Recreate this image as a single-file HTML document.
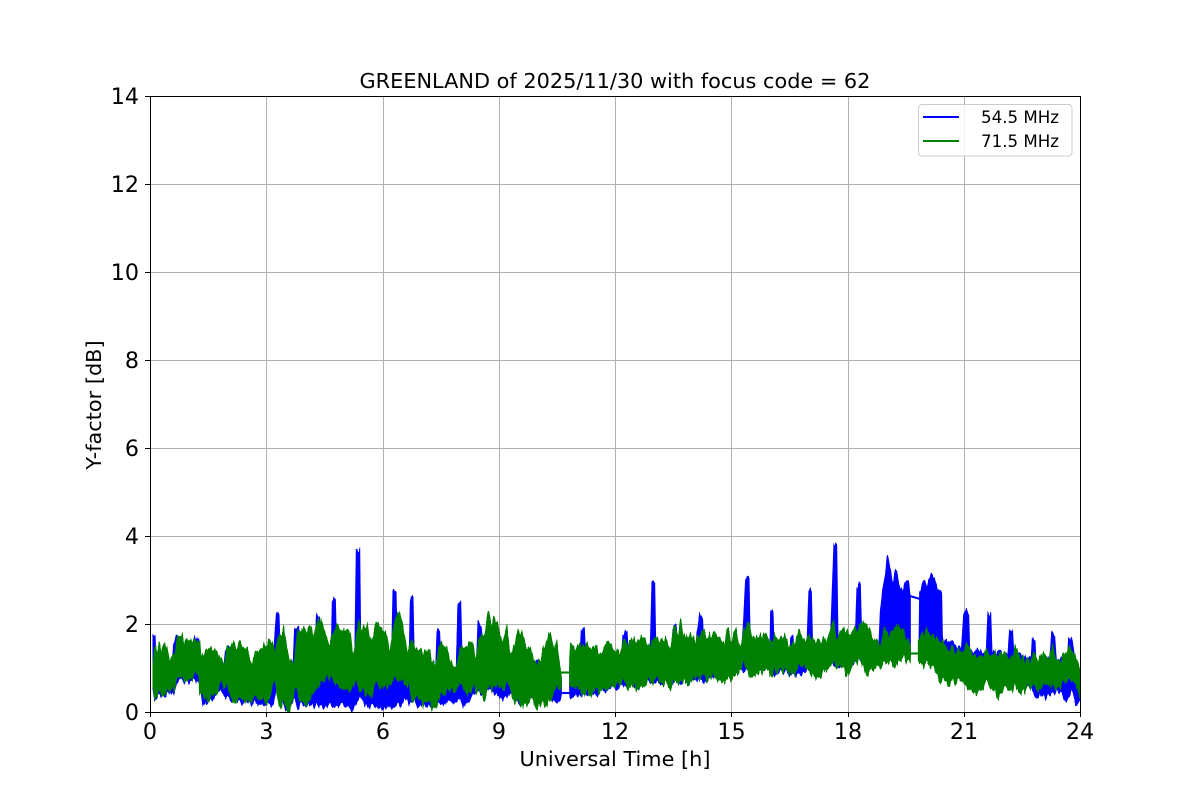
<!DOCTYPE html>
<html><head><meta charset="utf-8"><title>GREENLAND</title>
<style>
html,body{margin:0;padding:0;background:#fff;width:1200px;height:800px;overflow:hidden}
svg{display:block}
text{font-family:"DejaVu Sans",sans-serif;fill:#000}
.t{font-size:22.22px}
.l{font-size:20.83px}
.e{text-anchor:end}
.m{text-anchor:middle}
</style></head><body>
<svg width="1200" height="800" viewBox="0 0 1200 800" xmlns="http://www.w3.org/2000/svg">
<defs>
<clipPath id="ax"><rect x="150" y="96" width="930" height="616"/></clipPath>
<filter id="nb" filterUnits="userSpaceOnUse" x="140" y="500" width="950" height="230" color-interpolation-filters="sRGB">
<feTurbulence type="fractalNoise" baseFrequency="0.35 0.002" numOctaves="2" seed="3" result="n"/>
<feColorMatrix in="n" type="matrix" values="0 0 0 0 .5  0 1 0 0 0  0 0 0 0 .5  0 0 0 0 1" result="m"/>
<feDisplacementMap in="SourceGraphic" in2="m" scale="14" xChannelSelector="R" yChannelSelector="G"/>
</filter>
<filter id="ng" filterUnits="userSpaceOnUse" x="140" y="500" width="950" height="230" color-interpolation-filters="sRGB">
<feTurbulence type="fractalNoise" baseFrequency="0.35 0.002" numOctaves="2" seed="11" result="n"/>
<feColorMatrix in="n" type="matrix" values="0 0 0 0 .5  0 1 0 0 0  0 0 0 0 .5  0 0 0 0 1" result="m"/>
<feDisplacementMap in="SourceGraphic" in2="m" scale="22" xChannelSelector="R" yChannelSelector="G"/>
</filter>
</defs>
<rect width="1200" height="800" fill="#fff"/>
<g stroke="#b0b0b0" stroke-width="1" fill="none">
<path d="M266.5 96V712M383.5 96V712M499.5 96V712M615.5 96V712M731.5 96V712M848.5 96V712M964.5 96V712"/>
<path d="M150 624.5H1080M150 536.5H1080M150 448.5H1080M150 360.5H1080M150 272.5H1080M150 184.5H1080"/>
</g>
<g clip-path="url(#ax)">
<!-- blue -->
<g fill="#0000ff" stroke="#0000ff" stroke-width="5" stroke-linejoin="round" filter="url(#nb)">
<g transform="translate(140,521) scale(.33333)">
<polygon points="40,333 44,333 48,440 98,440 102,370 110,342 120,345 135,440 160,440 165,350 175,347 182,440 252,440 258,382 265,380 270,440 400,440 405,350 410,275 416,275 420,400 460,440 465,320 475,318 480,440 525,440 530,288 537,290 542,440 574,440 578,232 585,232 590,440 645,440 650,85 658,85 662,440 755,440 760,208 767,210 772,440 808,440 812,233 818,233 822,440 888,440 892,335 898,337 902,440 950,440 955,245 960,245 960,530 910,550 870,555 830,545 800,540 770,555 730,560 680,550 655,520 640,565 610,545 590,555 560,555 535,555 510,555 480,535 475,565 465,520 445,570 420,530 410,480 400,545 385,552 350,548 320,545 280,540 260,525 240,515 205,550 190,548 178,470 165,478 135,490 120,458 110,480 100,518 60,520 45,525 40,495"/>
</g>
<g transform="translate(450,521) scale(.33333)">
<polygon points="0,440 20,440 25,245 31,245 36,440 80,440 85,310 93,310 98,440 250,450 258,430 268,430 330,460 333,470 333,520 330,540 290,530 240,535 210,540 185,515 160,535 120,510 75,520 40,555 25,525 0,535"/>
<polygon points="360,440 390,440 395,328 402,328 407,440 515,430 520,345 530,330 536,430 600,420 603,340 607,185 613,185 617,420 665,420 670,318 678,320 683,420 738,410 742,330 750,285 757,285 761,410 875,400 880,320 888,170 896,170 900,400 960,400 960,440 880,440 830,450 770,473 720,480 670,485 620,485 580,490 525,495 480,500 440,515 405,525 375,525 360,522"/>
</g>
<g transform="translate(770,521) scale(.33333)">
<polygon points="0,420 3,268 8,268 13,420 60,420 63,345 68,345 72,420 110,420 118,207 123,207 128,420 180,420 186,270 193,68 199,68 204,420 255,420 262,200 270,187 276,420 325,420 332,270 338,215 348,150 352,103 358,140 370,190 378,145 385,195 400,215 408,180 415,180 420,228 420,400 330,410 105,445 70,457 40,452 0,455"/>
<polygon points="448,400 450,215 462,182 470,200 483,158 490,165 500,205 514,225 516,350 530,370 550,370 575,385 582,280 595,277 598,390 650,395 655,275 661,275 665,395 715,395 720,325 726,325 730,400 785,410 788,350 794,350 797,420 840,420 846,337 853,335 858,420 893,420 897,350 903,350 915,420 929,450 929,540 918,545 905,500 890,540 860,505 830,530 800,522 780,490 600,440 516,430"/>
</g>
</g>
<g fill="none" stroke="#0000ff" stroke-width="2.1">
<path d="M561 693H571"/>
<path d="M910 596L920 599"/>
</g>
<!-- green -->
<g fill="#008000" stroke="#008000" stroke-width="5" stroke-linejoin="round" filter="url(#ng)">
<g transform="translate(140,521) scale(.33333)">
<polygon points="40,430 45,370 50,400 58,375 63,400 72,365 80,390 88,425 100,420 108,385 115,350 125,340 132,365 140,355 150,365 158,355 165,385 178,360 182,420 195,400 208,370 215,400 230,385 240,430 255,420 262,390 272,380 280,360 290,380 300,355 308,385 320,378 330,420 342,415 355,390 370,380 385,352 395,365 405,410 415,335 430,335 440,380 455,430 465,405 475,320 485,340 495,310 510,315 520,370 535,300 548,305 560,350 575,360 590,305 605,325 620,340 630,330 637,420 648,370 657,292 665,340 680,310 690,370 710,310 725,330 740,335 748,400 760,325 775,262 790,330 805,410 815,345 825,390 835,395 850,385 860,410 870,395 885,430 900,375 915,372 930,420 945,440 960,410 960,470 940,500 900,525 890,550 860,550 820,530 810,500 770,460 720,510 710,480 690,530 650,485 620,515 600,490 560,455 520,525 485,540 465,490 445,575 420,545 405,475 385,535 350,530 320,540 300,520 280,540 260,500 240,495 215,530 195,535 180,520 178,460 165,470 135,480 120,455 108,485 100,515 60,520 45,525 40,495"/>
</g>
<g transform="translate(450,521) scale(.33333)">
<polygon points="0,425 20,430 30,400 45,380 62,355 75,420 90,355 105,330 115,285 125,320 130,297 145,335 155,370 170,325 180,410 200,345 215,335 225,370 238,365 255,440 270,425 285,380 303,330 312,395 320,368 333,460 333,490 325,500 305,515 290,555 270,555 258,570 245,510 220,555 195,540 180,490 145,510 120,505 100,525 75,505 45,510 25,500 0,500"/>
<polygon points="360,410 363,365 375,395 390,380 410,380 420,375 440,385 455,405 472,362 490,385 510,395 525,360 545,355 560,352 585,355 595,395 610,345 620,375 640,350 660,375 672,325 685,345 692,305 700,350 720,335 735,365 760,330 780,352 800,342 825,365 832,328 845,365 857,325 870,375 895,300 905,345 925,350 945,345 960,370 960,450 900,465 890,430 870,435 850,470 830,475 780,475 760,465 720,480 700,480 675,490 625,485 600,475 580,500 535,490 520,480 470,505 440,510 400,525 375,505 360,490"/>
</g>
<g transform="translate(770,521) scale(.33333)">
<polygon points="0,355 20,350 30,370 40,345 60,375 75,355 90,340 105,365 118,345 140,355 170,355 190,310 200,355 230,320 240,345 265,320 290,312 305,355 330,370 345,318 358,355 378,312 395,335 420,375 420,425 400,420 370,435 345,415 320,440 290,465 265,410 235,455 200,435 175,435 145,465 120,455 100,430 80,450 30,450 0,460"/>
<polygon points="446,360 460,335 480,345 495,355 510,352 525,380 560,395 580,395 592,360 605,395 625,410 645,395 665,405 685,390 710,405 740,392 760,410 780,415 795,395 815,400 835,430 848,378 860,415 880,405 900,370 915,410 925,445 929,450 929,535 915,480 900,465 860,495 830,500 800,490 780,490 740,515 720,490 685,520 650,485 620,515 580,480 545,490 510,475 490,440 460,435 446,420"/>
</g>
</g>
<g fill="none" stroke="#008000" stroke-width="2.1">
<path d="M561 672.5H570"/>
<path d="M910 653.5H919"/>
</g>
</g>
<!-- spines -->
<rect x="150.5" y="96.5" width="930" height="616" fill="none" stroke="#000" stroke-width="1"/>
<g stroke="#000" stroke-width="1" fill="none">
<path d="M150.5 712v5M266.5 712v5M383.5 712v5M499.5 712v5M615.5 712v5M731.5 712v5M848.5 712v5M964.5 712v5M1080.5 712v5"/>
<path d="M150 712.5h-5M150 624.5h-5M150 536.5h-5M150 448.5h-5M150 360.5h-5M150 272.5h-5M150 184.5h-5M150 96.5h-5"/>
</g>
<!-- tick labels -->
<text class="t m" x="150" y="739">0</text>
<text class="t m" x="266.5" y="739">3</text>
<text class="t m" x="383" y="739">6</text>
<text class="t m" x="499" y="739">9</text>
<text class="t m" x="615" y="739">12</text>
<text class="t m" x="731.5" y="739">15</text>
<text class="t m" x="848" y="739">18</text>
<text class="t m" x="964" y="739">21</text>
<text class="t m" x="1080" y="739">24</text>
<text class="t e" x="139" y="720">0</text>
<text class="t e" x="139" y="632">2</text>
<text class="t e" x="139" y="544">4</text>
<text class="t e" x="139" y="456">6</text>
<text class="t e" x="139" y="368">8</text>
<text class="t e" x="139" y="280">10</text>
<text class="t e" x="139" y="192">12</text>
<text class="t e" x="139" y="104">14</text>
<text class="l m" x="615" y="88">GREENLAND of 2025/11/30 with focus code = 62</text>
<text class="l m" x="615" y="766">Universal Time [h]</text>
<text class="l m" transform="translate(101,405) rotate(-90)">Y-factor [dB]</text>
<!-- legend -->
<rect x="918.5" y="104.5" width="153.5" height="51.5" rx="3.5" ry="3.5" fill="#fff" fill-opacity=".8" stroke="#cccccc" stroke-width="1"/>
<path d="M923 117H959" stroke="#0000ff" stroke-width="2.08" fill="none"/>
<path d="M923 141H959" stroke="#008000" stroke-width="2.08" fill="none"/>
<text x="981" y="123" font-size="16.67">54.5 MHz</text>
<text x="981" y="147" font-size="16.67">71.5 MHz</text>
</svg>
</body></html>
